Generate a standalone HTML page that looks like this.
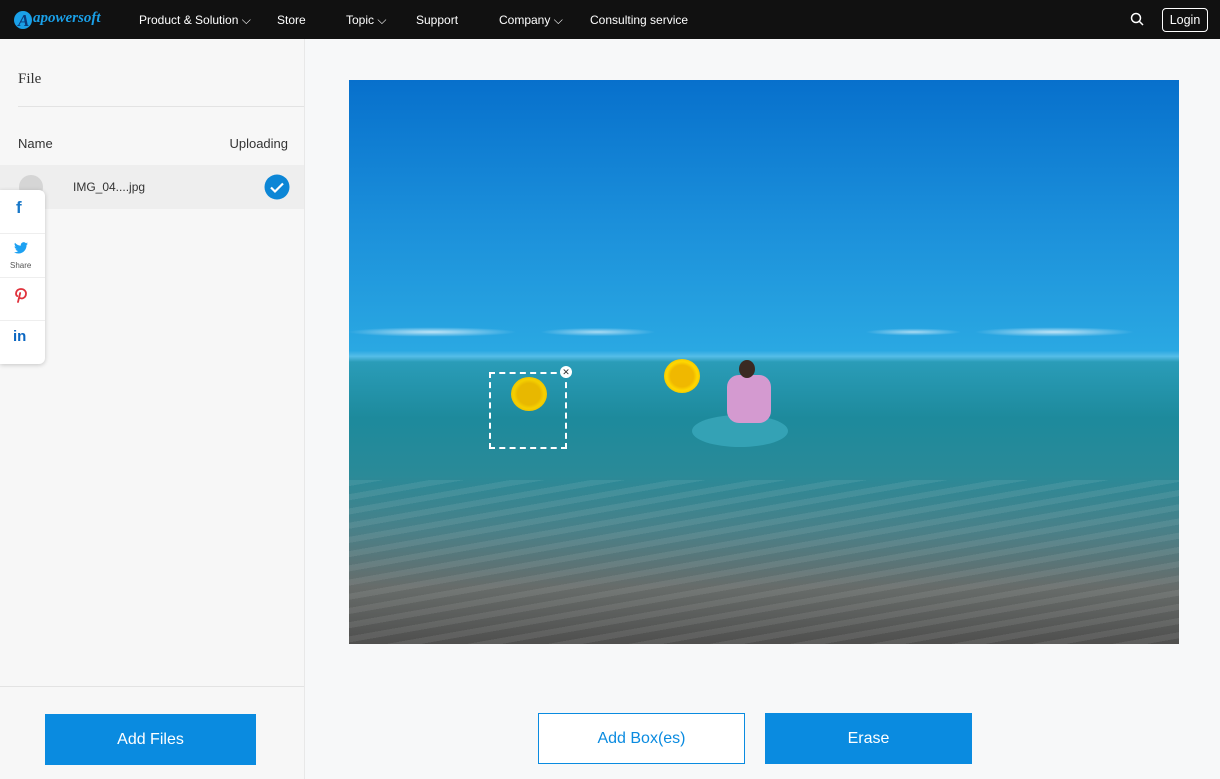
<!DOCTYPE html>
<html><head><meta charset="utf-8"><style>
*{margin:0;padding:0;box-sizing:border-box}
body{width:1220px;height:779px;overflow:hidden;background:#f7f8f9;font-family:"Liberation Sans",Arial,sans-serif;position:relative}
.nav{position:absolute;left:0;top:0;width:1220px;height:39px;background:#111;color:#fff;font-size:12px}
.nav span{position:absolute;top:13px}
.side{position:absolute;left:0;top:39px;width:305px;height:740px;background:#f7f7f7;border-right:1px solid #e8e8e8}
.btn{position:absolute;height:51px;font-size:16px;display:flex;align-items:center;justify-content:center}
</style></head><body>
<div class="nav">
<svg style="position:absolute;left:11px;top:7px" width="24" height="24"><circle cx="12" cy="13" r="9" fill="#1aa0e8"/><text x="7" y="19" font-family="Liberation Serif" font-style="italic" font-weight="bold" font-size="17" fill="#0b3a7a">A</text></svg>
<span style="left:33px;top:10px;font-family:'Liberation Serif',serif;font-style:italic;font-weight:bold;font-size:15px;color:#1aa0e8">apowersoft</span>
<span style="left:139px">Product &amp; Solution ⌵</span>
<span style="left:277px">Store</span>
<span style="left:346px">Topic ⌵</span>
<span style="left:416px">Support</span>
<span style="left:499px">Company ⌵</span>
<span style="left:590px">Consulting service</span>
<svg style="position:absolute;left:1130px;top:12px" width="14" height="14"><circle cx="6" cy="6" r="4.5" stroke="#fff" stroke-width="1.5" fill="none"/><line x1="9.5" y1="9.5" x2="13" y2="13" stroke="#fff" stroke-width="1.5"/></svg>
<div style="position:absolute;left:1162px;top:8px;width:46px;height:24px;border:1px solid #fff;border-radius:4px;text-align:center;line-height:22px;font-size:12.5px">Login</div>
</div>
<div class="side">
<div style="position:absolute;left:18px;top:32px;font-family:'Liberation Serif',serif;font-size:15px;color:#333">File</div>
<div style="position:absolute;left:18px;top:67px;width:286px;border-top:1px solid #e3e3e3"></div>
<div style="position:absolute;left:18px;top:97px;font-size:13px;color:#333">Name</div>
<div style="position:absolute;right:16px;top:97px;font-size:13px;color:#333">Uploading</div>
<div style="position:absolute;left:0;top:126px;width:304px;height:44px;background:#eeeeee"></div>
<div style="position:absolute;left:19px;top:136px;width:24px;height:24px;border-radius:50%;background:#d5d5d5"></div>
<div style="position:absolute;left:73px;top:141px;font-size:12px;color:#333">IMG_04....jpg</div>
<svg style="position:absolute;left:264px;top:135px" width="26" height="26"><circle cx="13" cy="13" r="12.5" fill="#0c86d6"/><path d="M7 13.5l4 4 8-8" stroke="#fff" stroke-width="2.2" fill="none"/></svg>
<div style="position:absolute;left:0;top:647px;width:304px;border-top:1px solid #e3e3e3"></div>
</div>
<div style="position:absolute;left:0;top:190px;width:45px;height:174px;background:#fff;border-radius:0 6px 6px 0;box-shadow:0 1px 5px rgba(0,0,0,.2)">
<div style="position:absolute;left:16px;top:8px;font-weight:bold;font-size:17px;color:#1877c8">f</div>
<div style="position:absolute;top:43px;width:45px;border-top:1px solid #eee"></div>
<svg style="position:absolute;left:14px;top:52px" width="14" height="12" viewBox="0 0 24 20"><path d="M24 2.4a10 10 0 0 1-2.8.8A5 5 0 0 0 23.3.5a10 10 0 0 1-3.1 1.2A4.9 4.9 0 0 0 11.8 6 14 14 0 0 1 1.7.9a4.9 4.9 0 0 0 1.5 6.6A4.9 4.9 0 0 1 1 6.9a4.9 4.9 0 0 0 3.9 4.8 5 5 0 0 1-2.2.1 4.9 4.9 0 0 0 4.6 3.4A9.9 9.9 0 0 1 0 17.3 14 14 0 0 0 7.5 19.5c9 0 14-7.5 14-14v-.6A10 10 0 0 0 24 2.4z" fill="#1da1f2"/></svg>
<div style="position:absolute;left:10px;top:71px;font-size:8px;color:#555">Share</div>
<div style="position:absolute;top:87px;width:45px;border-top:1px solid #eee"></div>
<svg style="position:absolute;left:15px;top:97px" width="12" height="16" viewBox="0 0 12 16"><path d="M3 15l2.2-9M6 2C2.5 2 1 4.5 1 6.5c0 1.2.5 2.2 1.3 2.6M5 11c1 .5 2 .6 3 .2 2-.8 3-2.6 3-4.8S9 2 6 2" stroke="#e0323c" stroke-width="1.8" fill="none" stroke-linecap="round"/></svg>
<div style="position:absolute;top:130px;width:45px;border-top:1px solid #eee"></div>
<div style="position:absolute;left:13px;top:138px;font-size:15px;color:#0a66c2;font-weight:bold">in</div>
</div>
<div class="btn" style="left:45px;top:714px;width:211px;background:#0a8be0;color:#fff">Add Files</div>
<div style="position:absolute;left:349px;top:80px;width:830px;height:564px;overflow:hidden;background:linear-gradient(#0770cc 0%,#1b8fda 25%,#2aa8e2 48%,#55bde8 49%,#2a9cb8 50%,#1d8a9c 60%,#2a8a98 70%,#4a8088 80%,#676c6a 90%,#4f4f4e 100%)">
<div style="position:absolute;left:0;top:210px;width:830px;height:60px;background:radial-gradient(ellipse at 10% 70%,rgba(255,255,255,.7) 0,transparent 8%),radial-gradient(ellipse at 30% 70%,rgba(255,255,255,.6) 0,transparent 7%),radial-gradient(ellipse at 68% 70%,rgba(255,255,255,.6) 0,transparent 6%),radial-gradient(ellipse at 85% 70%,rgba(255,255,255,.7) 0,transparent 8%)"></div>
<div style="position:absolute;left:0;top:400px;width:830px;height:164px;background:repeating-linear-gradient(170deg,rgba(255,255,255,.08) 0 6px,transparent 6px 14px)"></div>
<div style="position:absolute;left:140px;top:292px;width:78px;height:77px;border:2px dashed #fff"></div>
<div style="position:absolute;left:211px;top:286px;width:12px;height:12px;border-radius:50%;background:#fff;font-size:9px;line-height:12px;text-align:center;color:#333">✕</div>
<div style="position:absolute;left:162px;top:297px;width:36px;height:34px;border-radius:50%;background:radial-gradient(#e8b800 45%,#f5d000 60%,#e0a800 100%)"></div>
<div style="position:absolute;left:315px;top:279px;width:36px;height:34px;border-radius:50%;background:radial-gradient(#f0b800 45%,#ffd800 60%,#e0a800 100%)"></div>
<div style="position:absolute;left:343px;top:335px;width:96px;height:32px;border-radius:50%;background:#34a2b5"></div>
<div style="position:absolute;left:378px;top:295px;width:44px;height:48px;border-radius:12px;background:#d49ad0"></div>
<div style="position:absolute;left:390px;top:280px;width:16px;height:18px;border-radius:50%;background:#3a2a22"></div>
</div>
<div class="btn" style="left:538px;top:713px;width:207px;border:1px solid #0a8be0;background:#fff;color:#0a8be0">Add Box(es)</div>
<div class="btn" style="left:765px;top:713px;width:207px;background:#0a8be0;color:#fff">Erase</div>
</body></html>
